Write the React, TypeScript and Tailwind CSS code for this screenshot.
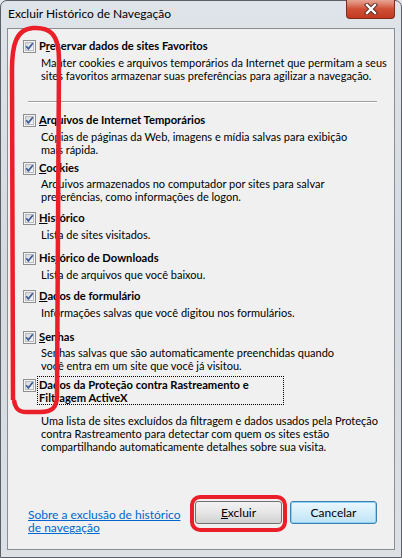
import React from 'react'

type Item = {
  label: React.ReactNode
  desc: React.ReactNode
  mt: string
  descMt: string
  focus?: boolean
}

function CheckBox() {
  return (
    <div className="relative mt-[1px] w-[13px] h-[13px] shrink-0 border border-[#8e8f8f] bg-[#f4f4f4] p-[1px]">
      <div className="w-full h-full border border-[#b8bcc2] bg-gradient-to-br from-[#d5d8dc] to-[#f6f6f7]" />
      <svg className="absolute left-0 top-0" width="11" height="11" viewBox="0 0 11 11">
        <path d="M2.2 5.2 L4.4 7.9 L8.8 2.3" fill="none" stroke="#3e5a97" strokeWidth="1.7" />
      </svg>
    </div>
  )
}

const items: Item[] = [
  {
    label: <><span className="underline">A</span>rquivos de Internet Temporários</>,
    desc: <>Cópias de páginas da Web, imagens e mídia salvas para exibição<br />mais rápida.</>,
    mt: 'mt-[10px]',
    descMt: 'mt-[3px]',
  },
  {
    label: <><span className="underline">C</span>ookies</>,
    desc: <>Arquivos armazenados no computador por sites para salvar<br />preferências, como informações de logon.</>,
    mt: 'mt-[5px]',
    descMt: 'mt-[2px]',
  },
  {
    label: <><span className="underline">H</span>istórico</>,
    desc: <>Lista de sites visitados.</>,
    mt: 'mt-[8px]',
    descMt: 'mt-[3px]',
  },
  {
    label: <>His<span className="underline">t</span>órico de Downloads</>,
    desc: <>Lista de arquivos que você baixou.</>,
    mt: 'mt-[10px]',
    descMt: 'mt-[3px]',
  },
  {
    label: <><span className="underline">D</span>ados de formulário</>,
    desc: <>Informações salvas que você digitou nos formulários.</>,
    mt: 'mt-[8px]',
    descMt: 'mt-[3px]',
  },
  {
    label: <><span className="underline">S</span>enhas</>,
    desc: <>Senhas salvas que são automaticamente preenchidas quando<br />você entra em um site que você já visitou.</>,
    mt: 'mt-[11px]',
    descMt: 'mt-[2px]',
  },
  {
    label: <>Dados da Proteção contra Rastreamento e<br />Filtragem ActiveX</>,
    desc: <>Uma lista de sites excluídos da filtragem e dados usados pela Proteção<br />contra Rastreamento para detectar com quem os sites estão<br />compartilhando automaticamente detalhes sobre sua visita.</>,
    mt: 'mt-[6px]',
    descMt: 'mt-[9px]',
    focus: true,
  },
]

function Row({ item }: { item: Item }) {
  return (
    <div className={item.mt}>
      <div className="flex items-start">
        <CheckBox />
        {item.focus ? (
          <div className="ml-[1px] -mt-[2px] w-[247px] whitespace-nowrap border border-dotted border-black pl-[1px] pt-[1px] text-[11.2px] font-bold leading-[13px]">
            {item.label}
          </div>
        ) : (
          <div className="ml-[3px] whitespace-nowrap text-[11.2px] font-bold leading-[13px]">{item.label}</div>
        )}
      </div>
      <div className={`${item.descMt} ml-[18px] whitespace-nowrap text-[11px] leading-[13px]`}>{item.desc}</div>
    </div>
  )
}

export default function App() {
  return (
    <div className="relative w-[402px] h-[558px] overflow-hidden bg-[#e4e6e9] font-['Segoe_UI',Lato,sans-serif] text-[12px] text-black">
      <div className="absolute inset-0 rounded-t-[7px] border border-[#5a6068] bg-gradient-to-b from-[#dfe4e9] via-[#d2d9e0] to-[#dde1e5]" />

      {/* title bar */}
      <div className="relative flex h-[28px] items-center pl-[8px] pb-[1px]">
        <span>Excluir Histórico de Navegação</span>
      </div>

      {/* close button */}
      <div className="absolute right-[7px] top-0 flex h-[19px] w-[49px] items-center justify-center rounded-b-[4px] border border-t-0 border-[#7a2c1f] bg-gradient-to-b from-[#e7a595] via-[#cf4f35] to-[#c33a1f]">
        <svg width="14" height="12" viewBox="0 0 14 12">
          <path d="M3 2 L11 10 M11 2 L3 10" stroke="#4a2a24" strokeWidth="4.2" strokeLinecap="square" />
          <path d="M3 2 L11 10 M11 2 L3 10" stroke="#ffffff" strokeWidth="2.4" strokeLinecap="square" />
        </svg>
      </div>

      {/* client area */}
      <div className="relative ml-[7px] flex h-[522px] w-[388px] flex-col border border-[#8a8e93] bg-[#f0f0f0] pl-[15px]">
        <div className="mt-[10px]">
          <div className="flex items-start">
            <CheckBox />
            <div className="ml-[3px] whitespace-nowrap text-[11.2px] font-bold leading-[13px]">
              P<span className="underline">r</span>eservar dados de sites Favoritos
            </div>
          </div>
          <div className="mt-[3px] ml-[18px] whitespace-nowrap text-[11px] leading-[13px]">
            Manter cookies e arquivos temporários da Internet que permitam a seus
            <br />
            sites favoritos armazenar suas preferências para agilizar a navegação.
          </div>
        </div>

        <div className="mt-[19px] ml-[5px] h-[2px] w-[349px] border-t border-[#a0a0a0] border-b border-b-white" />

        {items.map((item, i) => (
          <Row key={i} item={item} />
        ))}

        <div className="mt-auto mb-[15px] flex items-start pl-[5px] pr-[17px]">
          <a href="#" className="mt-[7px] whitespace-nowrap leading-[13px] text-[#0066cc] underline">
            Sobre a exclusão de histórico
            <br />
            de navegação
          </a>
          <div className="flex-1" />
          <button className="h-[23px] w-[87px] rounded-[3px] border border-[#707070] bg-gradient-to-b from-[#f2f2f2] via-[#e6e6e6] to-[#d0d0d0]">
            <span className="underline">E</span>xcluir
          </button>
          <button className="ml-[8px] h-[23px] w-[87px] rounded-[3px] border border-[#3c7fb1] bg-gradient-to-b from-[#ecf7fd] via-[#d5eefb] to-[#bde3f6] shadow-[inset_0_0_0_1px_#8ed1f1]">
            Cancelar
          </button>
        </div>
      </div>

      {/* red annotations */}
      <svg className="pointer-events-none absolute left-0 top-0" width="402" height="558" viewBox="0 0 402 558">
        <path
          d="M13 400 L12 70 C12 45 16 29 33 28 C49 27 59 33 59 60 L57 395 C57 408 52 412 40 412 L26 412 C18 412 15 408 14 400"
          fill="none"
          stroke="#ea1f2a"
          strokeWidth="4.5"
          strokeLinejoin="round"
        />
        <rect x="192" y="497" width="93" height="33" rx="8" fill="none" stroke="#ea1f2a" strokeWidth="4" />
      </svg>
    </div>
  )
}
